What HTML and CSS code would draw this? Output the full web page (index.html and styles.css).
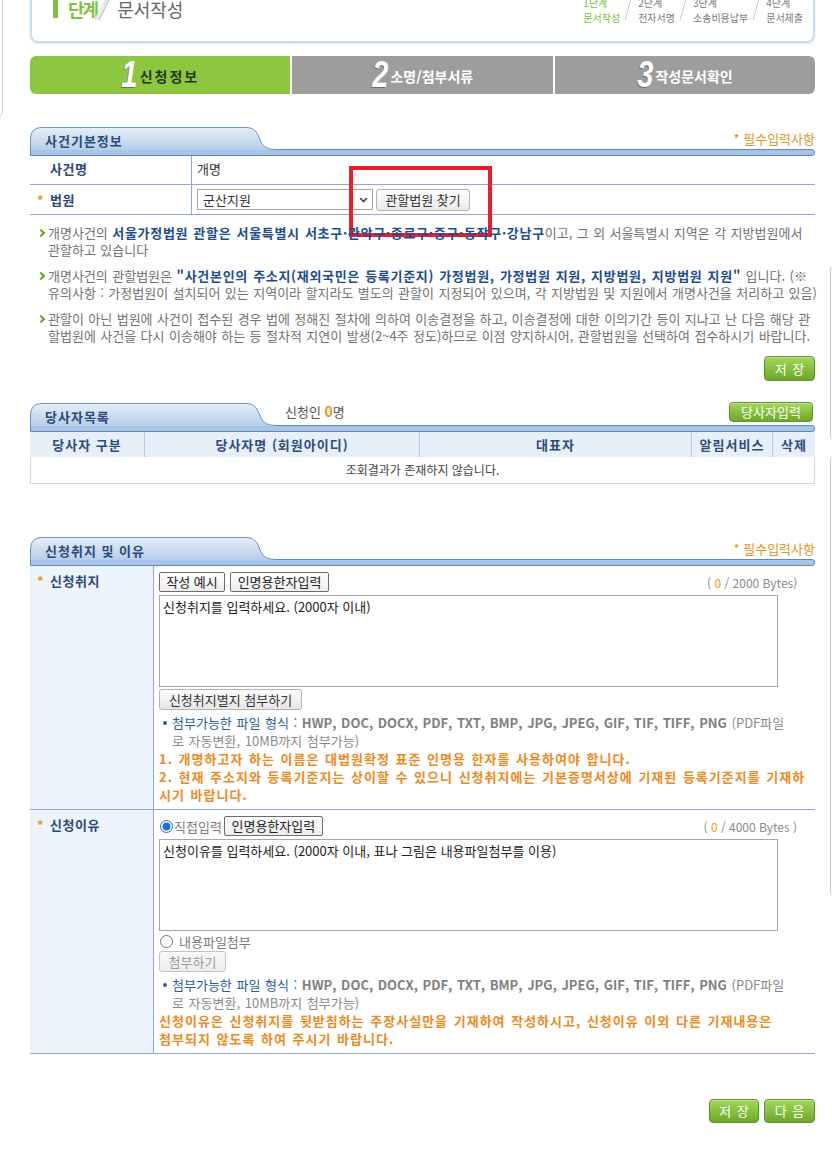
FILE: index.html
```html
<!DOCTYPE html>
<html lang="ko">
<head>
<meta charset="utf-8">
<title>문서작성 - 신청정보</title>
<link rel="stylesheet" href="styles.css">
</head>
<body>
<div class="viewport">
  <div class="edge-left"></div>
  <div class="edge-right r1"></div>
  <div class="edge-right r2"></div>

  <div class="page">
    <div class="topbox">
      <div class="title">
        <span class="t-one"></span><span class="t-step">단계</span>
        <svg class="t-slash" viewBox="0 0 20 24" aria-hidden="true">
          <defs><linearGradient id="sg" x1="0" y1="0" x2="1" y2="1"><stop offset="0" stop-color="#d6d6d6"/><stop offset="1" stop-color="#ffffff"/></linearGradient></defs>
          <polygon points="13,0 17,0 5,24 0,24" fill="url(#sg)"/>
          <line x1="17" y1="0" x2="5" y2="24" stroke="#b9b9b9" stroke-width="1"/>
        </svg>
        <span class="t-name">문서작성</span>
      </div>
      <ol class="steps">
        <li class="on"><span>1단계</span><span>문서작성</span></li>
        <li class="sl"><svg viewBox="0 0 10 30"><line x1="1" y1="29" x2="9" y2="1" stroke="#c6c6c6"/></svg></li>
        <li><span>2단계</span><span>전자서명</span></li>
        <li class="sl"><svg viewBox="0 0 10 30"><line x1="1" y1="29" x2="9" y2="1" stroke="#c6c6c6"/></svg></li>
        <li><span>3단계</span><span>소송비용납부</span></li>
        <li class="sl"><svg viewBox="0 0 10 30"><line x1="1" y1="29" x2="9" y2="1" stroke="#c6c6c6"/></svg></li>
        <li><span>4단계</span><span>문서제출</span></li>
      </ol>
    </div>

    <div class="tabs">
      <div class="tab on"><span class="num">1</span><span class="lbl sp">신청정보</span></div>
      <div class="tab"><span class="num">2</span><span class="lbl">소명/첨부서류</span></div>
      <div class="tab"><span class="num">3</span><span class="lbl">작성문서확인</span></div>
    </div>

    <section class="sec s1">
      <div class="sec-head">
        <div class="sec-tab">사건기본정보</div>
        <span class="req">* 필수입력사항</span>
      </div>
      <div class="sec-bar"></div>
      <div class="frow r-a">
        <div class="lab"><span class="star"></span>사건명</div>
        <div class="val">개명</div>
      </div>
      <div class="frow r-b">
        <div class="lab"><span class="star">*</span>법원</div>
        <div class="val">
          <select class="sel"><option>군산지원</option></select>
          <button class="wbtn2">관할법원 찾기</button>
        </div>
      </div>
      <div class="redbox"></div>

      <ul class="notes">
        <li>개명사건의 <b>서울가정법원 관할은 서울특별시 서초구·관악구·종로구·중구·동작구·강남구</b>이고, 그 외 서울특별시 지역은 각 지방법원에서<br>관할하고 있습니다</li>
        <li>개명사건의 관할법원은 <b>"사건본인의 주소지(재외국민은 등록기준지) 가정법원, 가정법원 지원, 지방법원, 지방법원 지원"</b> 입니다. (※<br>유의사항 : 가정법원이 설치되어 있는 지역이라 할지라도 별도의 관할이 지정되어 있으며, 각 지방법원 및 지원에서 개명사건을 처리하고 있음)</li>
        <li>관할이 아닌 법원에 사건이 접수된 경우 법에 정해진 절차에 의하여 이송결정을 하고, 이송결정에 대한 이의기간 등이 지나고 난 다음 해당 관<br>할법원에 사건을 다시 이송해야 하는 등 절차적 지연이 발생(2~4주 정도)하므로 이점 양지하시어, 관할법원을 선택하여 접수하시기 바랍니다.</li>
      </ul>
      <div class="act"><button class="gbtn">저 장</button></div>
    </section>

    <section class="sec s2">
      <div class="sec-head">
        <div class="sec-tab">당사자목록</div>
        <span class="cnt">신청인 <b>0</b>명</span>
        <button class="gbtn sm">당사자입력</button>
      </div>
      <div class="sec-bar"></div>
      <table class="list">
        <colgroup><col class="c1"><col class="c2"><col class="c3"><col class="c4"><col class="c5"></colgroup>
        <thead>
          <tr><th>당사자 구분</th><th>당사자명 (회원아이디)</th><th>대표자</th><th>알림서비스</th><th>삭제</th></tr>
        </thead>
        <tbody>
          <tr><td colspan="5">조회결과가 존재하지 않습니다.</td></tr>
        </tbody>
      </table>
    </section>

    <section class="sec s3">
      <div class="sec-head">
        <div class="sec-tab">신청취지 및 이유</div>
        <span class="req">* 필수입력사항</span>
      </div>
      <div class="sec-bar"></div>

      <div class="frow big">
        <div class="lab"><span class="star">*</span>신청취지</div>
        <div class="val">
          <div class="tool">
            <button class="wbtn w66">작성 예시</button>
            <button class="wbtn w99">인명용한자입력</button>
            <span class="count">( <b>0</b> / 2000 Bytes)</span>
          </div>
          <textarea class="ta">신청취지를 입력하세요. (2000자 이내)</textarea>
          <button class="gray w143">신청취지별지 첨부하기</button>
          <p class="ftype"><span class="fl">첨부가능한 파일 형식 :</span> <b>HWP, DOC, DOCX, PDF, TXT, BMP, JPG, JPEG, GIF, TIF, TIFF, PNG</b> (PDF파일<br>로 자동변환, 10MB까지 첨부가능)</p>
          <p class="warn">1. 개명하고자 하는 이름은 대법원확정 표준 인명용 한자를 사용하여야 합니다.<br>2. 현재 주소지와 등록기준지는 상이할 수 있으니 신청취지에는 기본증명서상에 기재된 등록기준지를 기재하<br>시기 바랍니다.</p>
        </div>
      </div>

      <div class="frow big">
        <div class="lab"><span class="star">*</span>신청이유</div>
        <div class="val">
          <div class="tool">
            <label class="rad"><input type="radio" name="rs" checked>직접입력</label>
            <button class="wbtn w99">인명용한자입력</button>
            <span class="count">( <b>0</b> / 4000 Bytes )</span>
          </div>
          <textarea class="ta">신청이유를 입력하세요. (2000자 이내, 표나 그림은 내용파일첨부를 이용)</textarea>
          <label class="rad line"><input type="radio" name="rs">내용파일첨부</label>
          <button class="gray dis w67">첨부하기</button>
          <p class="ftype"><span class="fl">첨부가능한 파일 형식 :</span> <b>HWP, DOC, DOCX, PDF, TXT, BMP, JPG, JPEG, GIF, TIF, TIFF, PNG</b> (PDF파일<br>로 자동변환, 10MB까지 첨부가능)</p>
          <p class="warn">신청이유은 신청취지를 뒷받침하는 주장사실만을 기재하여 작성하시고, 신청이유 이외 다른 기재내용은<br>첨부되지 않도록 하여 주시기 바랍니다.</p>
        </div>
      </div>
    </section>

    <div class="foot">
      <button class="gbtn">저 장</button>
      <button class="gbtn w51">다 음</button>
    </div>
  </div>
</div>
</body>
</html>
```

FILE: styles.css
```css
* { box-sizing: border-box; }
html, body { margin: 0; padding: 0; background: #fff; }
body {
  font-family: "Noto Sans CJK KR", "Noto Sans", sans-serif;
  font-size: 13px;
  line-height: 17px;
  color: #555;
}
button, select, textarea, input { font-family: inherit; }

.viewport { position: relative; width: 832px; min-height: 1169px; overflow: hidden; }

/* partially visible side panels */
.edge-left { position: absolute; left: -20px; top: -10px; width: 23px; height: 127px; border: 1px solid #d2d2d2; border-radius: 5px; }
.edge-right { position: absolute; left: 830px; width: 30px; border: 1px solid #c9c9c9; border-radius: 5px; }
.r1 { top: 265px; height: 176px; }
.r2 { top: 455px; height: 442px; }

.page { width: 815px; padding-left: 30px; }

/* top step box */
.topbox {
  margin-top: -17px;
  height: 60px;
  border: 2px solid #c8dcee;
  border-radius: 0 0 8px 8px;
  box-shadow: 0 1px 2px #dfe7ee;
  display: flex;
  justify-content: space-between;
  align-items: flex-start;
  padding: 13px 10px 0 20px;
}
.title { display: flex; align-items: flex-end; height: 22px; }
.t-one { width: 5px; height: 19px; background: #7fc241; margin: 0 10px 2px 1px; }
.t-step { font-size: 18px; font-weight: bold; color: #7fc241; line-height: 22px; letter-spacing: -2px; }
.t-slash { width: 20px; height: 24px; margin: 0 3px 0 -3px; }
.t-name { font-size: 18px; color: #666; line-height: 22px; }

.steps { list-style: none; margin: -3px 0 0; padding: 0; display: flex; align-items: flex-start; gap: 4px; }
.steps li { display: flex; flex-direction: column; font-size: 10px; line-height: 15px; color: #7a7a7a; }
.steps li.on { color: #79bd38; }
.steps li.sl svg { display: block; width: 10px; height: 30px; margin-top: -4px; }

/* process tabs */
.tabs { display: grid; grid-template-columns: repeat(3, 1fr); gap: 2px; margin-top: 13px; height: 38px; }
.tab { display: flex; align-items: center; justify-content: center; gap: 2px; background: #9d9d9d; color: #fff; }
.tab:first-child { border-radius: 6px 0 0 6px; }
.tab:last-child { border-radius: 0 6px 6px 0; }
.tab.on { background: #8dc63f; color: #233811; }
.num {
  display: inline-block;
  font: italic bold 37px/38px "Liberation Sans", sans-serif;
  color: #fff;
  transform: scaleX(.78);
  margin: 0 -2px;
  text-shadow: -1px 1px 0 #6a6a6a;
}
.lbl { font-size: 14px; font-weight: bold; line-height: 18px; margin-top: 2px; }
.lbl.sp { letter-spacing: 2px; }

/* section heads */
.sec { position: relative; }
.s1 { margin-top: 33px; }
.s2 { margin-top: 22px; }
.s3 { margin-top: 53px; }
.sec-head { position: relative; z-index: 1; display: flex; align-items: center; height: 22px; }
.sec-tab {
  align-self: flex-start;
  width: 246px;
  height: 23px;
  padding: 5px 0 0 15px;
  font-size: 13px;
  font-weight: bold;
  letter-spacing: 1px;
  line-height: 18px;
  color: #2b4a7a;
  background: url("data:image/svg+xml,%3Csvg xmlns='http://www.w3.org/2000/svg' width='246' height='23' viewBox='0 0 246 23'%3E%3Cdefs%3E%3ClinearGradient id='g' x1='0' y1='0' x2='0' y2='1'%3E%3Cstop offset='0' stop-color='%23e6eff9'/%3E%3Cstop offset='1' stop-color='%23b6cde9'/%3E%3C/linearGradient%3E%3C/defs%3E%3Cpath d='M0.5 23V12Q0.5 0.5 12 0.5H216Q225 0.5 228 8L231 15Q234 22.5 246 22.5V23Z' fill='url(%23g)'/%3E%3Cpath d='M0.5 23V12Q0.5 0.5 12 0.5H216Q225 0.5 228 8L231 15Q234 22.5 246 22.5' fill='none' stroke='%236d93c3'/%3E%3C/svg%3E") no-repeat;
}
.req { margin-left: auto; color: #e5941f; }
.sec-bar { height: 7px; background: #a8c3e3; border: 1px solid #6189bd; border-radius: 0 3px 3px 0; }

/* form rows */
.frow { display: flex; border-bottom: 1px solid #8eaad3; }
.frow .lab { flex: none; padding-left: 7px; color: #2b4a7a; font-weight: bold; letter-spacing: .5px; border-right: 1px solid #8eaad3; }
.star { display: inline-block; width: 13px; color: #e8961c; font-weight: bold; }
.s1 .lab { width: 162px; display: flex; align-items: center; }
.s1 .val { flex: 1; display: flex; align-items: center; padding-left: 5px; color: #333; }
.r-a { height: 29px; }
.r-a .lab, .r-a .val { padding-bottom: 3px; }
.r-b { height: 30px; }
.sel {
  -webkit-appearance: none; appearance: none;
  width: 176px; height: 21px;
  border: 1px solid #a6a6a6; border-radius: 0;
  padding: 0 18px 0 5px;
  font-size: 13px; color: #333;
  background: #fff url("data:image/svg+xml,%3Csvg xmlns='http://www.w3.org/2000/svg' width='9' height='6' viewBox='0 0 9 6'%3E%3Cpolyline points='1,1 4.5,4.5 8,1' fill='none' stroke='%23444' stroke-width='1.6'/%3E%3C/svg%3E") no-repeat right 4px center;
}
.wbtn2 {
  margin-left: 3px; width: 94px; height: 22px; padding: 0;
  border: 1px solid #b3b3b3; border-radius: 3px;
  background: linear-gradient(#ffffff, #e9e9e9);
  color: #333; font-size: 13px; line-height: 20px;
}
.redbox { position: absolute; left: 319px; top: 39px; width: 143px; height: 71px; border: 4px solid #ee1c28; }

/* notes */
.notes { list-style: none; margin: 9px 0 0; padding: 0 0 0 18px; white-space: nowrap; color: #727272; line-height: 17px; word-spacing: 0.8px; }
.notes li { position: relative; margin-bottom: 9px; }
.notes li:last-child { margin-bottom: 0; }
.notes li::before {
  content: ""; position: absolute; left: -10px; top: 6px;
  width: 4px; height: 4px;
  border-top: 2px solid #6aa531; border-right: 2px solid #6aa531;
  transform: rotate(45deg);
}
.notes b { color: #1d4d8f; letter-spacing: .7px; }

.act { display: flex; justify-content: flex-end; margin-top: 12px; }
.gbtn {
  width: 51px; height: 25px; padding: 0;
  border: 1px solid #5f9429; border-radius: 4px;
  background: linear-gradient(#a6d65d, #84bd3c 55%, #6fa62c);
  box-shadow: inset 0 1px 0 rgba(255,255,255,.35);
  color: #fff; font-size: 13px; line-height: 23px; word-spacing: 2px;
}

/* party list */
.cnt { align-self: flex-start; margin-left: 9px; color: #555; line-height: 17px; }
.cnt b { color: #f0961c; font-size: 14px; }
.gbtn.sm { align-self: flex-start; margin: -1px 2px 0 auto; width: 84px; height: 20px; line-height: 18px; }
.list { width: 100%; table-layout: fixed; border-collapse: separate; border-spacing: 0; }
.c1 { width: 115px; } .c2 { width: 275px; } .c3 { width: 272px; } .c4 { width: 81px; } .c5 { width: 42px; }
.list th { background: #e7eff9; color: #2d4c7e; font-weight: bold; letter-spacing: 1px; padding: 4px 0; line-height: 17px; border-right: 1px solid #b3c8e3; }
.list th:last-child { border-right: none; }
.list td { text-align: center; color: #444; font-size: 12px; padding: 4px 0 5px; line-height: 17px; border: 1px solid #d6d6d6; border-top: none; }

/* request rows */
.s3 .lab { width: 124px; background: #edf3fb; padding-top: 6px; }
.s3 .val { flex: 1; padding: 6px 10px 5px 5px; }
.tool { display: flex; align-items: center; height: 20px; }
.wbtn {
  height: 20px; padding: 0; margin-right: 5px;
  border: 1px solid #6d6d6d; border-radius: 2px;
  background: linear-gradient(#ffffff, #ececec);
  color: #222; font-size: 13px; line-height: 18px;
}
.w66 { width: 66px; }
.w99 { width: 99px; }
.w143 { width: 143px; }
.w67 { width: 67px; }
.count { margin: 0 8px 0 auto; color: #8a8a8a; font-size: 12px; }
.count b { color: #eea020; font-weight: normal; }
.ta {
  display: block; width: 619px; height: 92px; margin-top: 3px;
  border: 1px solid #a8a8a8; padding: 2px 3px;
  resize: none; font-size: 13px; line-height: 17px; color: #222;
}
.gray {
  display: block; margin-top: 2px; height: 21px; padding: 0;
  border: 1px solid #b4b4b4; border-radius: 3px;
  background: linear-gradient(#fdfdfd, #e6e6e6);
  color: #333; font-size: 13px; line-height: 19px;
}
.gray.dis { margin-top: 1px; color: #9a9a9a; background: linear-gradient(#fafafa, #ececec); border-color: #c4c4c4; }
.rad { display: inline-flex; align-items: center; color: #7a7a7a; margin-right: 2px; }
.rad input { margin: 0 1px 0 1px; width: 13px; height: 13px; accent-color: #1c6fe0; }
.rad.line { display: flex; height: 18px; margin-top: 1px; }
.rad.line input { margin-right: 6px; }
.ftype { position: relative; margin: 4px 0 0; padding-left: 13px; line-height: 18px; white-space: nowrap; word-spacing: 1px; color: #8a8a8a; }
.ftype::before { content: ""; position: absolute; left: 4px; top: 7px; width: 4px; height: 4px; border-radius: 50%; background: #2d5fa5; }
.ftype .fl { color: #2a5ca3; }
.ftype b { color: #808080; }
.warn { margin: 0; color: #ef8a1f; font-weight: bold; letter-spacing: 1px; word-spacing: 1px; line-height: 18px; white-space: nowrap; }

.foot { display: flex; justify-content: flex-end; gap: 5px; margin-top: 45px; }
.foot .gbtn { width: 50px; height: 24px; line-height: 22px; }
.foot .gbtn.w51 { width: 51px; }
```
